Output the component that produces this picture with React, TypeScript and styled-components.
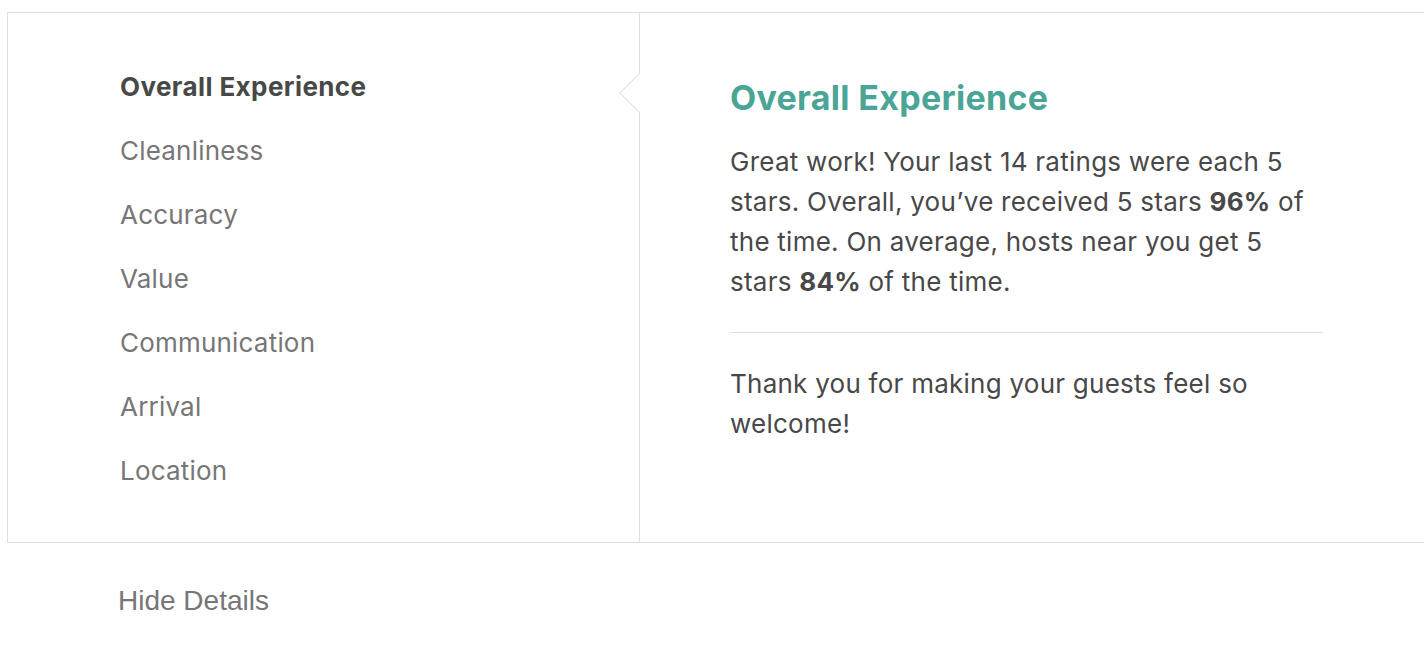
import React from "react";
import styled, { createGlobalStyle } from "styled-components";

const Global = createGlobalStyle`
  html, body { margin: 0; padding: 0; background: #fff; overflow: hidden; }
  body { font-family: Inter, "Noto Sans", sans-serif; color: #484848; }
`;

const Page = styled.div`
  padding: 12px 0 0 7px;
  width: 1500px;
`;

const Card = styled.section`
  display: flex;
  border: 1px solid #dce0e0;
  height: 529px;
  width: 1480px;
`;

const Sidebar = styled.nav`
  width: 632px;
  flex: none;
  padding: 42px 0 0 112px;
  box-sizing: border-box;
  border-right: 1px solid #dce0e0;
  position: relative;
`;

const Notch = styled.span`
  position: absolute;
  right: -14px;
  top: 66px;
  width: 27px;
  height: 27px;
  background: #fff;
  border-left: 1px solid #dce0e0;
  border-bottom: 1px solid #dce0e0;
  transform: rotate(45deg);
`;

const MenuItem = styled.div<{ $active?: boolean }>`
  font-size: 26px;
  line-height: 40px;
  padding: 12px 0;
  letter-spacing: ${(p) => (p.$active ? "0.4px" : "0.2px")};
  font-weight: ${(p) => (p.$active ? 700 : 400)};
  color: ${(p) => (p.$active ? "#484848" : "#767676")};
`;

const Detail = styled.article`
  padding: 65px 0 0 90px;
  width: 683px;
`;

const Title = styled.h2`
  margin: 0 0 24px;
  font-size: 34px;
  line-height: 40px;
  font-weight: 700;
  letter-spacing: 0.3px;
  color: #4aa597;
`;

const Body = styled.p`
  margin: 0;
  font-size: 26px;
  line-height: 40px;
  letter-spacing: 0.25px;
  width: 593px;
  color: #484848;
  b { font-weight: 700; }
`;

const Rule = styled.hr`
  border: none;
  border-top: 1px solid #dce0e0;
  margin: 30px 0 31px;
  width: 593px;
`;

const HideLink = styled.div`
  margin: 38px 0 0 111px;
  font-family: "Liberation Sans", Arial, sans-serif;
  font-size: 28px;
  line-height: 40px;
  color: #767676;
`;

const items = [
  "Overall Experience",
  "Cleanliness",
  "Accuracy",
  "Value",
  "Communication",
  "Arrival",
  "Location",
];

export default function App() {
  return (
    <Page>
      <Global />
      <Card>
        <Sidebar>
          {items.map((it, i) => (
            <MenuItem key={it} $active={i === 0}>
              {it}
            </MenuItem>
          ))}
          <Notch />
        </Sidebar>
        <Detail>
          <Title>Overall Experience</Title>
          <Body>
            Great work! Your last 14 ratings were each 5 stars. Overall, you’ve
            received 5 stars <b>96%</b> of the time. On average, hosts near you
            get 5 stars <b>84%</b> of the time.
          </Body>
          <Rule />
          <Body>Thank you for making your guests feel so welcome!</Body>
        </Detail>
      </Card>
      <HideLink>Hide Details</HideLink>
    </Page>
  );
}
